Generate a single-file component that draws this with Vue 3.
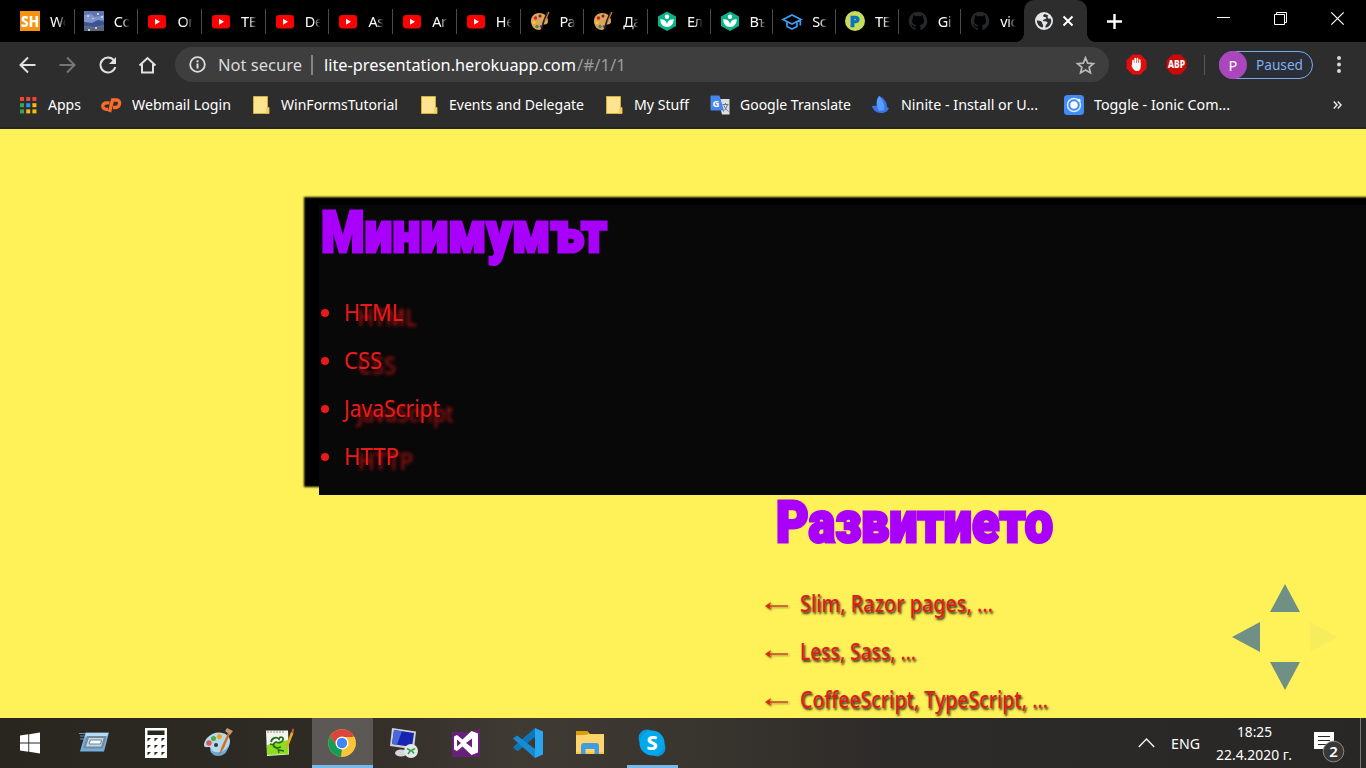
<script setup>
import { h } from 'vue'

// A line of text fitted to a fixed advance width.
const Fit = (p) =>
  h('svg', { class: 'fit', width: p.w, height: p.s * 1.4, 'font-size': p.s }, [
    h('text', { x: 0, y: p.s * 1.07, textLength: p.w, lengthAdjust: 'spacingAndGlyphs', fill: 'currentColor' }, p.t)
  ])
Fit.props = ['t', 'w', 's']

const tabs = [
  ['sh', 'We'], ['pic', 'Co'], ['yt', 'On'], ['yt', 'TE'], ['yt', 'De'], ['yt', 'As'], ['yt', 'Ar'], ['yt', 'He'],
  ['pal', 'Ра'], ['pal', 'Да'], ['leaf', 'Ел'], ['leaf', 'Въ'], ['cap', 'Sc'], ['p', 'TE'], ['git', 'Gi'], ['git', 'vic']
]
const marks = [
  ['apps', 'Apps', 33], ['cp', 'Webmail Login', 99], ['folder', 'WinFormsTutorial', 117],
  ['folder', 'Events and Delegate', 135], ['folder', 'My Stuff', 55], ['gt', 'Google Translate', 111],
  ['ninite', 'Ninite - Install or U...', 137], ['ionic', 'Toggle - Ionic Com...', 136]
]
const basics = [['HTML', 59], ['CSS', 38], ['JavaScript', 96], ['HTTP', 55]]
const dev = [['Slim, Razor pages, …', 193], ['Less, Sass, …', 116], ['CoffeeScript, TypeScript, …', 248]]
const apps = ['win', 'run', 'calc', 'paint', 'npp', 'chrome', 'rdp', 'vs', 'code', 'files', 'skype']
const dots = [0, 1, 2, 3, 4, 5, 6, 7, 8]
const dotColors = ['#f44336', '#f44336', '#f44336', '#34a853', '#2196f3', '#fbb912', '#34a853', '#fbb912', '#fbb912']
</script>

<template>
  <div class="screen">
    <header class="tabs">
      <div v-for="(t, i) in tabs" :key="i" class="tab" :class="{ narrow: i > 9, last: i === 15 }">
        <svg width="20" height="20" viewBox="0 0 20 20" class="fav">
          <template v-if="t[0] === 'sh'">
            <rect width="20" height="20" fill="#f8930d" />
            <text x="1" y="15.5" font-size="15" font-weight="800" textLength="18" lengthAdjust="spacingAndGlyphs" fill="#fff">SH</text>
          </template>
          <template v-else-if="t[0] === 'pic'">
            <rect width="20" height="20" fill="#5f75b0" />
            <path d="M0 4l7-1 4 3 9-2v5l-8 1-5 3-7-2z" fill="#8095cb" />
            <path d="M0 11l8 1 6-3 6 2v3l-9 2-11-1z" fill="#3e538f" />
            <path d="M0 16l8 1 12-2v5H0z" fill="#5d657c" />
            <path d="M3 4h2v2H3zM8 7h2v1H8zM13 2h2v2h-2zM17 5h2v2h-2zM11 16h2v2h-2zM4 18h2v2H4z" fill="#c5cdd5" />
          </template>
          <template v-else-if="t[0] === 'yt'">
            <rect x="1" y="4" width="18" height="13.5" rx="3.2" fill="#f00" />
            <path d="M8 7.800v6l5-3z" fill="#fff" />
          </template>
          <template v-else-if="t[0] === 'pal'">
            <path d="M9 2C4 2 .5 6 1 11s4 8 8 8c3 0 2-3 4-5 2-1 5 0 5-4 0-5-4-8-9-8z" fill="#dda35f" />
            <circle cx="10" cy="5" r="1.5" fill="#5c3218" /><circle cx="5.5" cy="7" r="1.7" fill="#d32020" />
            <circle cx="4" cy="11.5" r="1.6" fill="#e9d421" /><circle cx="7" cy="15.5" r="1.7" fill="#47933a" />
            <circle cx="11" cy="15.5" r="1.3" fill="#2c54c5" />
            <path d="M17.5 1l-4 10-2 8" stroke="#2a1a12" stroke-width="1.7" fill="none" />
            <path d="M19 1l-4 9" stroke="#c58144" stroke-width="1.2" />
          </template>
          <template v-else-if="t[0] === 'leaf'">
            <path d="M10 .5l9 5v9.500l-9 5-9-5V5.500z" fill="#0bb38b" />
            <circle cx="10" cy="5.800" r="2.200" fill="#fff" />
            <path d="M3.300 8.300c3.700-.2 6 1.700 6.700 4.700.7-3 3-4.900 6.700-4.700 0 4.700-2.500 7.700-6.700 7.700S3.300 13 3.300 8.300z" fill="#fff" />
          </template>
          <template v-else-if="t[0] === 'cap'">
            <path d="M1 8.500L10 4l9 4.500-9 4.500zM5 11v4.500l5 2.500 5-2.500V11M18.300 9v5.500" fill="none" stroke="#3f9cf0" stroke-width="1.700" />
          </template>
          <template v-else-if="t[0] === 'p'">
            <circle cx="10" cy="10" r="10" fill="#c6dc5d" />
            <text x="4.500" y="15.800" font-size="16" font-weight="900" stroke="#0873bd" stroke-width=".6" fill="#0873bd">P</text>
          </template>
          <template v-else>
            <path transform="scale(1.25)" fill="#24292e" d="M8 .5a7.500 7.500 0 0 0-2.400 14.600c.4.1.5-.1.5-.4v-1.400c-2.100.5-2.500-.9-2.500-.9-.3-.9-.8-1.100-.8-1.100-.7-.5 0-.5 0-.5.8.1 1.200.8 1.200.8.7 1.200 1.700.8 2.200.6.1-.5.3-.8.5-1-1.700-.2-3.400-.8-3.400-3.700 0-.8.3-1.500.8-2-.1-.2-.4-1 .1-2 0 0 .6-.2 2 .8a7 7 0 0 1 3.700 0c1.400-1 2-.8 2-.8.5 1 .2 1.800.1 2 .5.5.8 1.200.8 2 0 2.900-1.800 3.500-3.400 3.700.3.2.5.7.5 1.400v2.100c0 .2.100.5.5.4A7.500 7.500 0 0 0 8 .5z" />
          </template>
        </svg>
        <span class="tt">{{ t[1] }}</span>
      </div>
      <div class="active">
        <svg width="18" height="18" viewBox="0 0 18 18">
          <circle cx="9" cy="9" r="9" fill="#e4e6e8" />
          <path d="M9.500 1.900c-1.300.8-1.800 2-.8 2.800s2.500-.2 2.600 1.200-3.300 1-3.300 2.600 4.500.2 4.500 2-2.300 1.500-2 5.300c3-.5 5.700-3.200 5.700-6.800 0-1-.3-1.800-.6-2.500l-1.800.3-1.300-1.300.5-2.300zM1.900 8.300c2 .8 3.700.3 4.700 1.500s.3 1.700 1.200 2.700.2 1.800-.2 3c-3.400-.5-5.900-3.500-5.700-7.200z" fill="#303133" />
        </svg>
        <svg width="12" height="12" viewBox="0 0 12 12"><path d="M1.500 1.500l9 9m0-9l-9 9" stroke="#fff" stroke-width="2" /></svg>
      </div>
      <svg class="plus" width="15" height="15" viewBox="0 0 15 15"><path d="M7.500 0v15M0 7.500h15" stroke="#fff" stroke-width="2.400" /></svg>
      <div class="wins">
        <svg width="13" height="13"><path d="M0 5.500h13" stroke="#fff" /></svg>
        <svg width="13" height="13"><path d="M.5 2.500h10v10H.5zM2.500 2.500V.5h10v10h-2" fill="none" stroke="#fff" /></svg>
        <svg width="13" height="13"><path d="M.3.3l12.400 12.400m0-12.400L.3 12.700" stroke="#fff" stroke-width="1.200" /></svg>
      </div>
    </header>

    <div class="toolbar">
      <svg class="nav" width="140" height="20" viewBox="0 0 140 20" fill="none" stroke="#e0e1e2" stroke-width="2">
        <path d="M16.500 10H2M9 2.500L1.500 10 9 17.500" />
        <path d="M40.500 10h15M48 2.500l7.500 7.500-7.500 7.500" stroke="#767676" />
        <path d="M95 5.500a7.500 7.500 0 1 0 1.300 6.500" /><path d="M97 2v7h-7z" fill="#e0e1e2" stroke="none" />
        <path d="M120.500 10.500l8-7.500 8 7.500M123 9v8.500h11V9" />
      </svg>
      <div class="omni">
        <svg width="17" height="17" viewBox="0 0 17 17"><circle cx="8.500" cy="8.500" r="7.300" fill="none" stroke="#dcdddf" stroke-width="1.800" /><path d="M8.500 7.500v5M8.500 4.300v2" stroke="#dcdddf" stroke-width="2" /></svg>
        <Fit class="ns" t="Not secure" :w="84" :s="17" />
        <i class="bar"></i>
        <Fit class="host" t="lite-presentation.herokuapp.com" :w="252" :s="17" />
        <Fit class="path" t="/#/1/1" :w="49" :s="17" />
        <svg class="star" width="19" height="18" viewBox="0 0 19 18"><path d="M9.500 1.800l2.200 5.300 5.700.5-4.300 3.700 1.300 5.500-4.900-2.900-4.900 2.900 1.300-5.500-4.300-3.700 5.700-.5z" fill="none" stroke="#b9babb" stroke-width="1.700" /></svg>
      </div>
      <svg class="ext1" width="21" height="21" viewBox="0 0 21 21">
        <path d="M6.500.5h8l6 6v8l-6 6h-8l-6-6v-8z" fill="#e40d0d" />
        <path d="M7 11V6.500M9.200 10V4.500M11.500 10V4.500M13.800 11V6" stroke="#fff" stroke-width="1.700" stroke-linecap="round" />
        <path d="M6.150 9h8.500v4c0 2-1 4-3.200 4-2.800 0-4.800-2-5.800-5z" fill="#fff" />
      </svg>
      <svg class="ext2" width="21" height="21" viewBox="0 0 21 21">
        <path d="M6.500.5h8l6 6v8l-6 6h-8l-6-6v-8z" fill="#cb0909" />
        <text x="2" y="14" font-size="10" font-weight="800" fill="#fff" textLength="17" lengthAdjust="spacingAndGlyphs">ABP</text>
      </svg>
      <i class="sep"></i>
      <div class="profile"><b>P</b><Fit t="Paused" :w="47" :s="15" /></div>
      <svg class="dots" width="4" height="18"><circle cx="2" cy="2" r="2" /><circle cx="2" cy="8.500" r="2" /><circle cx="2" cy="15" r="2" /></svg>
    </div>

    <nav class="marks">
      <div v-for="(m, i) in marks" :key="i" class="mark" :class="m[0]">
        <svg width="20" height="20" viewBox="0 0 20 20">
          <template v-if="m[0] === 'apps'">
            <rect v-for="d in dots" :key="d" :x="2 + (d % 3) * 6.200" :y="2 + Math.floor(d / 3) * 6.200" width="4" height="4" :fill="dotColors[d]" />
          </template>
          <template v-else-if="m[0] === 'cp'">
            <g fill="none" stroke="#fb6b2c" stroke-width="3.300">
              <path d="M7.500 7.800H4.500c-5 0-5 6.500 0 6.500H6" /><path d="M7.500 17l3-12H14.500c5 0 3.500 7.500-1 7.500H11" />
            </g>
          </template>
          <template v-else-if="m[0] === 'folder'">
            <path d="M2.500 1.500h14v11h1.500v6H2.500z" fill="#fee491" stroke="#d5ad39" />
            <path d="M15 18.500v-5l2-1 1 1v5z" fill="#f4cf5f" />
          </template>
          <template v-else-if="m[0] === 'gt'">
            <path d="M8 4h11.500v15.500H12z" fill="#dce0e3" /><path d="M1.500.5h8l4.500 15H1.500Q.5 15.500.5 14.500v-13Q.5.500 1.500.500z" fill="#4786ed" />
            <text x="2.500" y="11.500" font-size="9.500" font-weight="700" fill="#fff">G</text>
            <path d="M12.500 9.500h6M15.500 8v1.500m2 0c-1 4-3 6-4.500 7m1-6c1 3 3 5 4.500 6" fill="none" stroke="#66737d" />
          </template>
          <template v-else-if="m[0] === 'ninite'">
            <path d="M1 11c2-.5 3.500-.5 4.500 0C5 7 6 3 8 1c5 2 8 6 8 11l2 1c-1 3-4 5-8 5-5 0-8-3-9-7z" fill="#3974e8" />
            <path d="M8 1C5.500 5 5 10 8 16l5-1c1-5-1-10-5-14z" fill="#5a9cff" />
          </template>
          <template v-else>
            <rect width="20" height="20" rx="3.500" fill="#408cf8" />
            <circle cx="10" cy="10" r="6.500" fill="none" stroke="#d8e8ff" stroke-width="1.500" /><circle cx="10" cy="10" r="3.700" fill="#fff" /><circle cx="15" cy="5.300" r="1.500" fill="#fff" />
          </template>
        </svg>
        <Fit :t="m[1]" :w="m[2]" :s="14.800" />
      </div>
      <svg class="more" width="9" height="8"><path d="M.8.5L4 4 .8 7.500M4.800.5L8 4 4.800 7.500" fill="none" stroke="#e6e6e6" stroke-width="1.500" /></svg>
    </nav>

    <main class="page">
      <section class="box">
        <svg class="head" width="300" height="60"><text x="2" y="46.500" textLength="286" lengthAdjust="spacingAndGlyphs">Минимумът</text></svg>
        <ul>
          <li v-for="b in basics" :key="b[0]"><i></i><Fit :t="b[0]" :w="b[1]" :s="23.500" /></li>
        </ul>
      </section>
      <section class="next">
        <svg class="head" width="300" height="60"><text x="2" y="46.500" textLength="277" lengthAdjust="spacingAndGlyphs">Развитието</text></svg>
        <ul>
          <li v-for="d in dev" :key="d[0]">
            <svg class="arr" width="24" height="12"><path d="M1 6h22" stroke="#c93a1c" stroke-width="1.300" /><path d="M0 6l6-4-1.500 4L6 10z" fill="#d82b18" /></svg>
            <Fit :t="d[0]" :w="d[1]" :s="23.200" />
          </li>
        </ul>
      </section>
      <svg class="pad" width="106" height="106" fill="#709085">
        <path d="M53 0l15 28H38zM0 53l28-15v30zM38 78h30l-15 28z" /><path d="M78 38l28 15-28 15z" fill="#f7ec5c" />
      </svg>
    </main>

    <footer class="task">
      <div v-for="a in apps" :key="a" class="app" :class="a">
        <svg width="30" height="30" viewBox="0 0 30 30">
          <template v-if="a === 'win'">
            <path d="M5 7.600l8.300-1.300v8.300H5zM14.200 6.200L25 4.600v10H14.200zM5 15.500h8.300v8.300L5 22.500zM14.200 15.500H25v9.900l-10.800-1.600z" fill="#fff" />
          </template>
          <template v-else-if="a === 'run'">
            <path d="M6.500 4.500H30L25 23.500H1z" fill="#71aee0" /><path d="M7 5h22l-1 3.500H6z" fill="#b9dcf5" />
            <path d="M9 9h17l-3 10.500H5.500z" fill="#b9dcf0" stroke="#7b8791" stroke-width="2.200" />
            <path d="M11.500 12H22.500l-1 4H10z" fill="#fff" stroke="#60849f" /><path d="M0 5.500h6M1 8h4M1 11h4" stroke="#7db0d8" stroke-width=".8" />
          </template>
          <template v-else-if="a === 'calc'">
            <path d="M4 0h22v30H4z" fill="#fff" /><path d="M6.500 2.500h17v4.500h-17z" fill="#292622" />
            <path v-for="d in dots" :key="d" :transform="`translate(${6.500 + (d % 3) * 7} ${10 + Math.floor(d / 3) * 7})`" d="M0 0h3.500L0 3.500z" fill="#292622" />
          </template>
          <template v-else-if="a === 'paint'">
            <path d="M16 4.500C7 4.500 1 12 1 17c0 3 3 2 5 2 3 0 0 4 3 6 6 4 18-1 18-12 0-5-5-8.500-11-8.500z" fill="#b4daef" />
            <path d="M8 21c2 5 15 5 18-5-1 7-4 12-11 12-5 0-7-3-7-7z" fill="#6ba8d4" />
            <circle cx="6" cy="15" r="2.700" fill="#e45649" /><circle cx="10.500" cy="10.500" r="2.500" fill="#54a946" /><circle cx="16.500" cy="8.500" r="2.600" fill="#f2a51b" /><circle cx="13" cy="17" r="2" fill="#34373b" />
            <path d="M15.500 28l3-9L25 5l2 1-6 14z" fill="#d26d24" /><path d="M22 3l2-3 6 3-3 4z" fill="#c19770" />
          </template>
          <template v-else-if="a === 'npp'">
            <path d="M1 2.500h22l1 24L2 28z" fill="#f3f4ed" /><path d="M2 17l21-5 .5 14L2 27z" fill="#8ddd20" />
            <path d="M3 2v3M6 2v3M9 2v3M12 2v3M15 2v3M18 2v3" stroke="#777" stroke-width=".8" />
            <path d="M6 14c1-5 6-5 8-3 1-3 5-2 4 1s-5 3-7 2c-3 1-4 5 1 6l4-1" fill="none" stroke="#246c1e" stroke-width="1.800" />
            <path d="M5 16l4 1M13 21l1 4m0-3l5 1" fill="none" stroke="#246c1e" stroke-width="1.500" />
            <path d="M21 18l5-14 2.500 1-5 13-3 3z" fill="#e5a923" /><path d="M26.500 3.500l1-3 1.500.5-.5 4z" fill="#db5344" />
          </template>
          <template v-else-if="a === 'chrome'">
            <circle cx="15" cy="15" r="13.800" fill="#fbc437" />
            <path d="M3.050 8.100A13.800 13.800 0 0 1 27 8.100L21 12H15L9 18z" fill="#dc463a" />
            <path d="M3.050 8.100L9.600 18.200 15 20.500l-1 8.300A13.800 13.800 0 0 1 3.050 8.100z" fill="#129d58" />
            <path d="M15 9h12.400A13.800 13.800 0 0 1 14.500 28.800L20.500 18z" fill="#fbc437" />
            <circle cx="15" cy="15" r="6.500" fill="#fff" /><circle cx="15" cy="15" r="5.200" fill="#4386f3" />
          </template>
          <template v-else-if="a === 'rdp'">
            <path d="M3 0l24 3.500-2 18L1 18z" fill="#ced2d3" /><path d="M5 2l20 3-2 14L3 16z" fill="#1723b3" /><path d="M5 2l8 1.200-5 13.500-5-.7z" fill="#4c67dc" />
            <ellipse cx="12" cy="25" rx="6" ry="3.500" fill="#d4d7d8" />
            <circle cx="22" cy="23" r="7" fill="#e5e8e8" /><path d="M18 20.500l3.500 2-2.500 3.500m7-5.500l-3.500 2 2.500 3" fill="none" stroke="#32a34a" stroke-width="1.600" />
          </template>
          <template v-else-if="a === 'vs'">
            <path d="M1 4h18l10-3v28H1z" fill="#68217a" /><path d="M20.500 3L27 5.500v19L20.500 27l-9-8.500L6 23l-3-1.500V8.500L6 7l5.500 4.500zM21 10.500L15 15l6 4.500zM6 11.500v7l4-3.500z" fill="#fff" fill-rule="evenodd" />
          </template>
          <template v-else-if="a === 'code'">
            <path d="M22 0v9L5 23l-3-1.500-2-2.500z" fill="#0c76b9" /><path d="M0 10.500L4 7.500l18 13.500v9z" fill="#168bd2" /><path d="M22 0l8 3.500v23L22 30z" fill="#2aa5ef" />
          </template>
          <template v-else-if="a === 'files'">
            <path d="M1 3h11l3 3H29v20H1z" fill="#f9c74c" /><path d="M1 3h11l2 2-2 2H1z" fill="#dc9b08" /><path d="M1 7.500L14 6.500h15V24H1z" fill="#fdd56c" />
            <path d="M6 26V18q0-3 3-3h12q3 0 3 3v8h-4.500v-5h-9v5z" fill="#439be0" />
          </template>
          <template v-else>
            <circle cx="10" cy="10" r="8.500" fill="#0798dc" /><circle cx="20" cy="20" r="8.500" fill="#0798dc" /><circle cx="15" cy="15" r="12.500" fill="#00a9ec" />
            <text x="9.500" y="22" font-size="20" font-weight="800" fill="#fff">S</text>
          </template>
        </svg>
      </div>
      <div class="tray">
        <svg width="17" height="10"><path d="M.8 9l7.700-8 7.700 8" fill="none" stroke="#f2f2f2" stroke-width="1.400" /></svg>
        <Fit class="eng" t="ENG" :w="29" :s="15" />
        <div class="clock"><Fit t="18:25" :w="35" :s="15" /><Fit t="22.4.2020 г." :w="76" :s="15" /></div>
        <svg class="note" width="31" height="32">
          <path d="M0 0h20v17h-7l-3 4v-4H0z" fill="#fff" /><path d="M4 4.500h12M4 8.500h12M4 12.500h8" stroke="#292724" stroke-width="1.200" />
          <circle cx="19.500" cy="19.500" r="10.300" fill="#393735" stroke="#8c8a88" />
          <text x="15.300" y="25" font-size="15" font-weight="600" fill="#fff">2</text>
        </svg>
      </div>
    </footer>
  </div>
</template>

<style>
body { margin: 0; overflow: hidden; }
</style>

<style scoped>
.screen { width: 1366px; height: 768px; overflow: hidden; display: flex; flex-direction: column; font-family: "Noto Sans", "Open Sans", sans-serif; color: #fff; }
svg { display: block; flex: none; overflow: visible; }
.tabs { height: 42px; background: #000; display: flex; align-items: center; padding-left: 11px; flex: none; }
.tab { width: 63.7px; height: 25px; flex: none; box-sizing: border-box; border-right: 1px solid #4c4c4c; display: flex; align-items: center; padding-left: 9px; }
.tab.narrow { width: 62.7px; }
.tab.last { border-color: transparent; width: 62.5px; }
.tt { margin-left: 10px; width: 16px; overflow: hidden; white-space: nowrap; font-size: 14.5px; letter-spacing: -.4px; line-height: 22px; padding-bottom: 1px; -webkit-mask-image: linear-gradient(90deg, #000 50%, transparent 98%); mask-image: linear-gradient(90deg, #000 50%, transparent 98%); }
.active { width: 63px; height: 42px; flex: none; box-sizing: border-box; background: #2d2d2d; border-radius: 10px 10px 0 0; display: flex; align-items: center; padding-left: 11px; gap: 9px; position: relative; }
.active::before, .active::after { content: ""; position: absolute; bottom: 0; width: 8px; height: 8px; left: -8px; background: radial-gradient(circle at 0 0, transparent 7.5px, #2d2d2d 8px); }
.active::after { left: auto; right: -8px; background: radial-gradient(circle at 100% 0, transparent 7.5px, #2d2d2d 8px); }
.plus { margin-left: 20.5px; }
.wins { display: flex; gap: 44px; margin-left: auto; padding-right: 22px; margin-top: -5px; }
.toolbar { height: 45px; flex: none; background: #2d2d2d; display: flex; align-items: center; }
.nav { margin-left: 18.5px; }
.omni { margin-left: 16.5px; width: 934px; height: 35px; border-radius: 18px; background: #3e3e3e; box-sizing: border-box; padding: 0 14px; display: flex; align-items: center; flex: none; }
.ns { margin-left: 12px; color: #d9dadb; }
.bar { width: 1.5px; height: 20px; background: #858585; margin: 0 11.5px 0 9px; }
.path { color: #9b9b9b; margin-left: 1px; }
.star { margin-left: auto; }
.ext1 { margin-left: 17px; }
.ext2 { margin-left: 19px; }
.sep { width: 1px; height: 20px; background: #585858; margin-left: 17px; }
.profile { box-sizing: border-box; width: 94px; height: 28px; margin-left: 14px; border: 1.5px solid #7ea9e8; border-radius: 14px; background: #292e37; color: #83adf0; display: flex; align-items: center; }
.profile b { width: 28px; height: 28px; flex: none; margin: 0 9px 0 -1px; border-radius: 50%; background: #ab47bc; color: #fff; font: 400 14.5px/28px "Noto Sans", sans-serif; text-align: center; }
.dots { margin-left: 24px; fill: #d9d9d9; }
.marks { height: 42px; flex: none; box-sizing: border-box; background: #2d2d2d; border-bottom: 2px solid #242424; padding: 0 24px 5px 18px; display: flex; align-items: center; gap: 20.5px; }
.mark { display: flex; align-items: center; gap: 10px; }
.mark .fit { margin-top: -1px; }
.ionic { margin-left: 5.5px; }
.more { margin-left: auto; }
.page { height: 589px; flex: none; position: relative; background: #fff258; overflow: hidden; box-sizing: border-box; padding-top: 76px; }
.box { margin: 0 -40px 0 319px; height: 290px; background: #080808; box-shadow: -15px -8px 2px #000; color: #ea1a1a; }
.head { height: 60px; font: 900 57px Roboto, sans-serif; fill: #a900fb; stroke: #a900fb; stroke-width: 3px; }
ul { list-style: none; margin: 0; padding: 24px 0 0; }
li { height: 48px; display: flex; align-items: center; }
.box li i { width: 8px; height: 8px; border-radius: 50%; background: #ea1a1a; margin: 0 15px 0 2px; }
.box li .fit { margin: -2px 0 0 0; text-shadow: 15px 5px 4px rgba(234, 26, 26, .75); }
.next { margin-left: 774px; color: #e01c1c; }
.next ul { margin-left: -9px; padding-top: 25px; }
.next li .fit { margin: -2px 0 0 11px; font-weight: 500; text-shadow: 1.5px 2px 2.5px rgba(0, 0, 0, .85); }
.arr { filter: drop-shadow(1px 1px 1px rgba(0, 0, 0, .5)); margin-top: 3px; }
.pad { position: absolute; left: 1232px; top: 455px; }
.task { height: 50px; flex: none; background: linear-gradient(90deg, #292620 0, #2e2a24 22%, #3f3a32 38%, #38342e 52%, #2d2b29 65%, #292725 100%); display: flex; }
.app { width: 62px; box-sizing: border-box; display: flex; align-items: center; justify-content: center; flex: none; }
.win { width: 63px; padding-right: 3px; }
.chrome { background: #5b5855; box-shadow: inset 0 -3px #76b9ed; width: 61px; margin-left: 1px; padding-right: 1px; }
.app.skype { width: 51px; box-shadow: inset 0 -3px #76b9ed; margin-left: 6px; padding-right: 1px; }
.tray { margin-left: auto; display: flex; align-items: center; padding-right: 15px; border-right: 1px solid #777; margin-right: 5px; }
.eng { margin-left: 16px; }
.clock { display: flex; flex-direction: column; align-items: center; gap: 2px; margin: 0 22px 0 16px; }
.note { margin-top: 9px; }
</style>
